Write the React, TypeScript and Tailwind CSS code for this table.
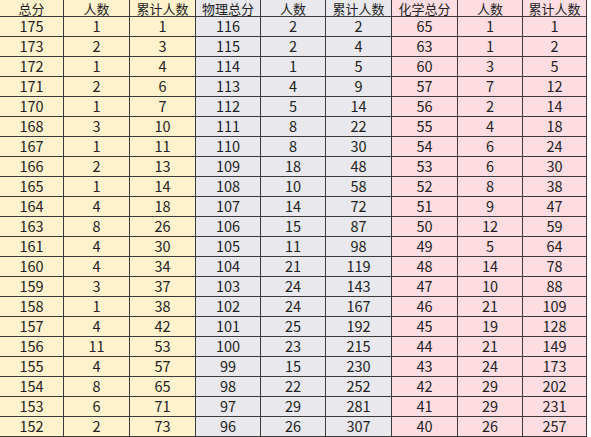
const totals = [175, 173, 172, 171, 170, 168, 167, 166, 165, 164, 163, 161, 160, 159, 158, 157, 156, 155, 154, 153, 152];
const totalCounts = [1, 2, 1, 2, 1, 3, 1, 2, 1, 4, 8, 4, 4, 3, 1, 4, 11, 4, 8, 6, 2];
const physics = [116, 115, 114, 113, 112, 111, 110, 109, 108, 107, 106, 105, 104, 103, 102, 101, 100, 99, 98, 97, 96];
const physicsCounts = [2, 2, 1, 4, 5, 8, 8, 18, 10, 14, 15, 11, 21, 24, 24, 25, 23, 15, 22, 29, 26];
const chem = [65, 63, 60, 57, 56, 55, 54, 53, 52, 51, 50, 49, 48, 47, 46, 45, 44, 43, 42, 41, 40];
const chemCounts = [1, 1, 3, 7, 2, 4, 6, 6, 8, 9, 12, 5, 14, 10, 21, 19, 21, 24, 29, 29, 26];

// running totals
const cumulative = (arr: number[]) => {
  let sum = 0;
  return arr.map((n) => (sum += n));
};

const totalCum = cumulative(totalCounts);
const physicsCum = cumulative(physicsCounts);
const chemCum = cumulative(chemCounts);

const yellow = 'bg-[#fff2cc]';
const gray = 'bg-[#e9e9ed]';
const pink = 'bg-[#fddde2]';

const columns = [
  { w: 'w-[64px]', bg: yellow },
  { w: 'w-[66px]', bg: yellow },
  { w: 'w-[66px]', bg: yellow },
  { w: 'w-[65px]', bg: gray },
  { w: 'w-[65px]', bg: gray },
  { w: 'w-[66px]', bg: gray },
  { w: 'w-[66px]', bg: pink },
  { w: 'w-[65px]', bg: pink },
  { w: 'w-[64px]', bg: pink },
];

const headers = ['总分', '人数', '累计人数', '物理总分', '人数', '累计人数', '化学总分', '人数', '累计人数'];

const rows = totals.map((t, i) => [
  t,
  totalCounts[i],
  totalCum[i],
  physics[i],
  physicsCounts[i],
  physicsCum[i],
  chem[i],
  chemCounts[i],
  chemCum[i],
]);

const cell = 'flex shrink-0 items-center justify-center border-r border-b border-[#3a3a3a] text-[#222] leading-none';

export default function App() {
  return (
    <div className="w-[591px] h-[437px] overflow-hidden bg-white font-['Noto_Sans_CJK_SC','Noto_Sans',sans-serif]">
      <div className="flex flex-col w-[587px]">
        <div className="flex h-[17px]">
          {headers.map((h, i) => (
            <div key={i} className={`${cell} ${columns[i].w} ${columns[i].bg} text-[13px]`}>
              {h}
            </div>
          ))}
        </div>
        {rows.map((r, ri) => (
          <div key={ri} className="flex h-[20px]">
            {r.map((v, ci) => (
              <div key={ci} className={`${cell} ${columns[ci].w} ${columns[ci].bg} text-[14.5px]`}>
                {v}
              </div>
            ))}
          </div>
        ))}
      </div>
    </div>
  );
}
